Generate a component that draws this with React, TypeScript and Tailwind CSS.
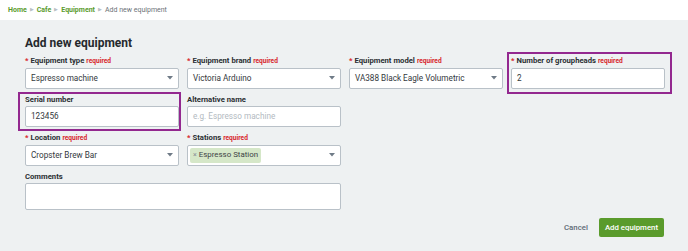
import { ReactNode } from "react";

const font = { fontFamily: "Roboto, 'Liberation Sans', sans-serif" };

function Caret() {
    return (
        <svg width="6" height="4" viewBox="0 0 6 4" className="shrink-0">
            <path d="M0 0h6L3 3.5z" fill="#6f7b87" />
        </svg>
    );
}

function Label({ text, required }: { text: string; required?: boolean }) {
    return (
        <div className="mb-[1.5px] flex h-[10px] items-center text-[7.7px] font-bold leading-[10px] text-[#2b2f33]">
            {required && <span className="mr-[2px] text-[#d7262c]">*</span>}
            <span>{text}</span>
            {required && (
                <span className="ml-[2px] text-[6.6px] text-[#d7262c]">required</span>
            )}
        </div>
    );
}

function Box({ children, select }: { children?: ReactNode; select?: boolean }) {
    return (
        <div className="flex h-[21px] items-center justify-between rounded-[2px] border border-[#b9c1c8] bg-white pl-[5px] pr-[5px] text-[8.2px] text-[#33383d]">
            <div className="flex items-center">{children}</div>
            {select && <Caret />}
        </div>
    );
}

interface FieldProps {
    label: string;
    required?: boolean;
    select?: boolean;
    children?: ReactNode;
    highlight?: "left" | "right";
}

function Field({ label, required, select, children, highlight }: FieldProps) {
    return (
        <div className="relative">
            {highlight === "left" && (
                <div className="pointer-events-none absolute -top-[3px] -bottom-[4px] -left-[7px] -right-[2px] border-2 border-[#93288f]" />
            )}
            {highlight === "right" && (
                <div className="pointer-events-none absolute -top-[4px] -bottom-[5px] -left-[4px] -right-[7px] border-2 border-[#93288f]" />
            )}
            <Label text={label} required={required} />
            <Box select={select}>{children}</Box>
        </div>
    );
}

export default function App() {
    return (
        <div className="flex min-h-screen flex-col bg-[#eef1f2]" style={font}>
            {/* Breadcrumb */}
            <div className="flex h-[20px] items-center gap-[3px] bg-white pl-[8px] text-[7px]">
                <span className="font-bold text-[#5a9b2c]">Home</span>
                <span className="text-[4.5px] text-[#b9bfc4]">▶</span>
                <span className="font-bold text-[#5a9b2c]">Cafe</span>
                <span className="text-[4.5px] text-[#b9bfc4]">▶</span>
                <span className="font-bold text-[#5a9b2c]">Equipment</span>
                <span className="text-[4.5px] text-[#b9bfc4]">▶</span>
                <span className="text-[#6c7278]">Add new equipment</span>
            </div>

            <div className="flex-1 px-[25px] pt-[15px]">
                <h1 className="mb-[5px] text-[12px] font-bold leading-[16px] text-[#25292d]">
                    Add new equipment
                </h1>

                <div className="grid w-[640px] grid-cols-4 gap-x-[8px] gap-y-[6px]">
                    <Field label="Equipment type" required select>
                        Espresso machine
                    </Field>
                    <Field label="Equipment brand" required select>
                        Victoria Arduino
                    </Field>
                    <Field label="Equipment model" required select>
                        VA388 Black Eagle Volumetric
                    </Field>
                    <Field label="Number of groupheads" required highlight="right">
                        2
                    </Field>

                    <Field label="Serial number" highlight="left">
                        123456
                    </Field>
                    <Field label="Alternative name">
                        <span className="text-[#b3bac1]">e.g. Espresso machine</span>
                    </Field>
                    <div />
                    <div />

                    <Field label="Location" required select>
                        Cropster Brew Bar
                    </Field>
                    <Field label="Stations" required select>
                        <span className="-ml-[3px] flex h-[15px] items-center gap-[2px] rounded-[2px] bg-[#d5e7c8] px-[3px] text-[7.9px] text-[#3d4246]">
                            <span className="text-[7px] text-[#8a9096]">×</span>
                            Espresso Station
                        </span>
                    </Field>
                    <div />
                    <div />

                    <div className="col-span-2">
                        <Label text="Comments" />
                        <div className="h-[27px] rounded-[2px] border border-[#b9c1c8] bg-white" />
                    </div>
                </div>

                <div className="mt-[8px] flex w-[639px] items-center justify-end gap-[11px]">
                    <span className="text-[7.8px] font-medium text-[#5d6975]">Cancel</span>
                    <button className="flex h-[19px] items-center rounded-[2px] bg-[#5a9b2c] px-[6px] text-[7.8px] font-medium text-white">
                        Add equipment
                    </button>
                </div>
            </div>
        </div>
    );
}
